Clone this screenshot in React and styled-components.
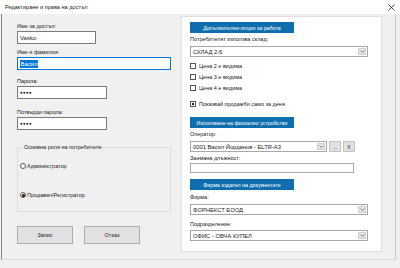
import React from 'react';
import styled, { createGlobalStyle } from 'styled-components';

const GlobalStyle = createGlobalStyle`
  html, body {
    margin: 0;
    padding: 0;
    background: #f0f0f0;
  }
  * {
    box-sizing: border-box;
  }
`;

// --- Данни ---
const STOCK_FLAGS = [
  { label: 'Цена 2 е видима', checked: false },
  { label: 'Цена 3 е видима', checked: false },
  { label: 'Цена 4 е видима', checked: false },
];

function CloseIcon() {
  return (
    <svg width="7" height="7" viewBox="0 0 7 7">
      <path d="M0.5 0.5 L6.5 6.5 M6.5 0.5 L0.5 6.5" stroke="#111" strokeWidth="0.8" />
    </svg>
  );
}

function Chevron() {
  return (
    <svg width="5" height="3" viewBox="0 0 5 3">
      <path d="M0.5 0.5 L2.5 2.5 L4.5 0.5" stroke="#555" strokeWidth="0.7" fill="none" />
    </svg>
  );
}

function Select({ value, $w }) {
  return (
    <SelectBox $w={$w}>
      <SelectValue>{value}</SelectValue>
      <SelectArrow>
        <Chevron />
      </SelectArrow>
    </SelectBox>
  );
}

function Field({ label, $mt, children }) {
  return (
    <FieldBlock $mt={$mt}>
      <Label>{label}</Label>
      {children}
    </FieldBlock>
  );
}

export default function App() {
  return (
    <>
      <GlobalStyle />
      <Window>
        <TitleBar>
          <span>Редактиране и права на достъп</span>
          <CloseIcon />
        </TitleBar>
        <Frame>
          <LeftColumn>
            <Field label="Име за достъп:" $mt={6}>
              <TextInput $w={79}>Vasko</TextInput>
            </Field>
            <Field label="Име и фамилия:" $mt={4}>
              <TextInput $w={154} $focused>
                <Selection>Васил</Selection>
              </TextInput>
            </Field>
            <Field label="Парола:" $mt={7}>
              <TextInput $w={90}><Dots>●●●●</Dots></TextInput>
            </Field>
            <Field label="Потвърди парола:" $mt={9}>
              <TextInput $w={90}><Dots>●●●●</Dots></TextInput>
            </Field>

            <GroupBox>
              <Legend>Основна роля на потребителя</Legend>
              <RadioRow $mt={11}>
                <Radio />
                Администратор
              </RadioRow>
              <RadioRow $mt={21}>
                <Radio $checked />
                Продавач/Регистратор
              </RadioRow>
            </GroupBox>

            <ButtonRow>
              <Button>Запис</Button>
              <Button>Отказ</Button>
            </ButtonRow>
          </LeftColumn>

          <Panel>
            <SectionHeader>Допълнителни опции за работа</SectionHeader>
            <PanelLabel $mt={2}>Потребителят използва склад:</PanelLabel>
            <Gap $h={3} />
            <Select value="СКЛАД 2-5" $w={178} />
            <Gap $h={5} />
            {STOCK_FLAGS.map((f, i) => (
              <CheckRow key={f.label} $mt={i === 0 ? 0 : 3}>
                <CheckBox $checked={f.checked} />
                {f.label}
              </CheckRow>
            ))}
            <CheckRow $mt={8}>
              <CheckBox $checked />
              Показвай продажби само за деня
            </CheckRow>

            <SectionHeader $mt={9}>Използване на фискално устройство</SectionHeader>
            <PanelLabel $mt={2}>Оператор:</PanelLabel>
            <Gap $h={3} />
            <InlineRow>
              <Select value="0001 Васил Йорданов - ELTR-A3" $w={137} />
              <SmallButton>...</SmallButton>
              <SmallButton>X</SmallButton>
            </InlineRow>
            <PanelLabel $mt={2}>Заемана длъжност:</PanelLabel>
            <Gap $h={1} />
            <PlainInput />

            <SectionHeader $mt={6}>Фирма издател на документите</SectionHeader>
            <PanelLabel $mt={3}>Фирма:</PanelLabel>
            <Gap $h={3} />
            <Select value="ФОРНЕКСТ ЕООД" $w={178} />
            <PanelLabel $mt={5}>Подразделение:</PanelLabel>
            <Gap $h={2} />
            <Select value="ОФИС - ОВЧА КУПЕЛ" $w={178} />
          </Panel>
        </Frame>
      </Window>
    </>
  );
}

// --- Стили ---
const Window = styled.div`
  width: 400px;
  height: 268px;
  display: flex;
  flex-direction: column;
  background: #f0f0f0;
  font-family: "Liberation Sans", Arial, sans-serif;
  color: #1a1a1a;
  overflow: hidden;
`;

const TitleBar = styled.div`
  height: 14px;
  flex-shrink: 0;
  background: #fff;
  display: flex;
  align-items: center;
  justify-content: space-between;
  padding: 0 5px 0 5px;
  font-size: 5.6px;
`;

const Frame = styled.div`
  height: 246px;
  flex-shrink: 0;
  margin: 0 4px 0 1px;
  border-left: 1px solid #8a8a8a;
  border-right: 1px solid #c8c8c8;
  border-bottom: 1px solid #d9d9d9;
  padding: 2px 0 0 15px;
  display: flex;
  align-items: flex-start;
  gap: 10px;
`;

const LeftColumn = styled.div`
  width: 154px;
  display: flex;
  flex-direction: column;
  align-items: flex-start;
`;

const FieldBlock = styled.div`
  margin-top: ${({ $mt }) => $mt}px;
  display: flex;
  flex-direction: column;
`;

const Label = styled.div`
  font-size: 5.5px;
  line-height: 8px;
  height: 8px;
  margin-bottom: 1px;
`;

const TextInput = styled.div`
  width: ${({ $w }) => $w}px;
  height: 13px;
  background: #fff;
  border: 1px solid ${({ $focused }) => ($focused ? '#0078d7' : '#7a7a7a')};
  display: flex;
  align-items: center;
  padding-left: 2px;
  font-size: 6px;
`;

const Selection = styled.span`
  background: #0078d7;
  color: #fff;
  line-height: 8px;
  padding: 0 0.5px;
`;

const Dots = styled.span`
  font-size: 4.5px;
  letter-spacing: 0.3px;
`;

const GroupBox = styled.fieldset`
  margin: 13px 0 0 0;
  width: 154px;
  height: 69px;
  border: 1px solid #dcdcdc;
  padding: 0 0 0 2px;
  display: flex;
  flex-direction: column;
`;

const Legend = styled.legend`
  font-size: 5.5px;
  line-height: 8px;
  margin-left: 3px;
  padding: 0 1px;
`;

const RadioRow = styled.div`
  margin-top: ${({ $mt }) => $mt}px;
  height: 8px;
  display: flex;
  align-items: center;
  gap: 1px;
  font-size: 5.5px;
`;

const Radio = styled.span`
  width: 6px;
  height: 6px;
  border-radius: 50%;
  border: 1px solid #555;
  background: #fff;
  display: inline-flex;
  align-items: center;
  justify-content: center;

  &::after {
    content: '';
    width: 3px;
    height: 3px;
    border-radius: 50%;
    background: ${({ $checked }) => ($checked ? '#111' : 'transparent')};
  }
`;

const ButtonRow = styled.div`
  margin-top: 14px;
  display: flex;
  gap: 11px;
`;

const Button = styled.div`
  width: 56px;
  height: 18px;
  background: #e1e1e1;
  border: 1px solid #adadad;
  display: flex;
  align-items: center;
  justify-content: center;
  font-size: 5.5px;
`;

const Panel = styled.div`
  width: 201px;
  height: 236px;
  background: #fff;
  border: 1px solid #e0e0e0;
  padding: 5px 0 0 8px;
  display: flex;
  flex-direction: column;
  align-items: flex-start;
`;

const SectionHeader = styled.div`
  margin-top: ${({ $mt = 0 }) => $mt}px;
  width: 104px;
  height: 11px;
  background: #0e6eae;
  color: #fff;
  font-size: 5.3px;
  display: flex;
  align-items: center;
  justify-content: center;
`;

const PanelLabel = styled.div`
  margin-top: ${({ $mt }) => $mt}px;
  font-size: 5.5px;
  line-height: 8px;
  height: 8px;
`;

const Gap = styled.div`
  height: ${({ $h }) => $h}px;
  flex-shrink: 0;
`;

const SelectBox = styled.div`
  width: ${({ $w }) => $w}px;
  height: 11px;
  background: #fff;
  border: 1px solid #a8a8a8;
  display: flex;
  align-items: stretch;
  flex-shrink: 0;
`;

const SelectValue = styled.div`
  flex: 1;
  display: flex;
  align-items: center;
  padding-left: 2px;
  font-size: 5.8px;
  white-space: nowrap;
`;

const SelectArrow = styled.div`
  width: 8px;
  margin: 1px;
  background: #e6e6e6;
  border: 0.5px solid #cfcfcf;
  display: flex;
  align-items: center;
  justify-content: center;
`;

const CheckRow = styled.div`
  margin-top: ${({ $mt }) => $mt}px;
  height: 8px;
  display: flex;
  align-items: center;
  gap: 3px;
  font-size: 5.5px;
`;

const CheckBox = styled.span`
  width: 6px;
  height: 6px;
  border: 1px solid #555;
  background: #fff;
  display: inline-flex;
  align-items: center;
  justify-content: center;

  &::after {
    content: '';
    width: 2px;
    height: 2px;
    background: ${({ $checked }) => ($checked ? '#222' : 'transparent')};
  }
`;

const InlineRow = styled.div`
  display: flex;
  gap: 2px;
`;

const SmallButton = styled.div`
  width: 12px;
  height: 11px;
  background: #e1e1e1;
  border: 1px solid #c4c4c4;
  display: flex;
  align-items: center;
  justify-content: center;
  font-size: 5px;
`;

const PlainInput = styled.div`
  width: 164px;
  height: 10px;
  background: #fff;
  border: 1px solid #a8a8a8;
`;
